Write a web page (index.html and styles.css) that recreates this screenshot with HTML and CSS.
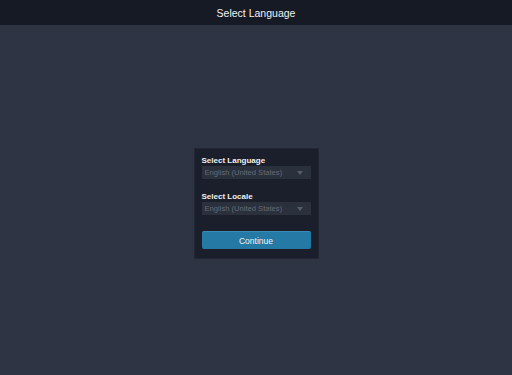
FILE: index.html
```html
<!DOCTYPE html>
<html lang="en">

<head>
    <meta charset="UTF-8">
    <link rel="stylesheet" href="styles.css">
</head>

<body>
    <header class="top-bar">Select Language</header>

    <main class="page">
        <div class="lang-panel">
            <label class="field-label">Select Language</label>
            <div class="select-box">
                <span>English (United States)</span>
                <span class="caret"></span>
            </div>

            <label class="field-label">Select Locale</label>
            <div class="select-box">
                <span>English (United States)</span>
                <span class="caret"></span>
            </div>

            <button class="continue-button">Continue</button>
        </div>
    </main>
</body>

</html>
```

FILE: styles.css
```css
html,
body {
    height: 100%;
}

body {
    margin: 0;
    font-family: "Liberation Sans", Arial, sans-serif;
    background-color: #2e3443;
    display: flex;
    flex-direction: column;
}

.top-bar {
    height: 25px;
    line-height: 26px;
    background-color: #161a25;
    color: #f2f2f2;
    text-align: center;
    font-size: 10.5px;
}

.page {
    flex: 1;
    display: flex;
    align-items: center;
    justify-content: center;
    padding-top: 7px;
}

.lang-panel {
    width: 109px;
    padding: 6px 7px 9px;
    background-color: #1a1f2b;
    border: 1px solid #222735;
    display: flex;
    flex-direction: column;
}

.field-label {
    color: #f0f0f0;
    font-size: 8px;
    font-weight: bold;
    height: 11px;
    line-height: 11px;
}

.select-box {
    height: 13px;
    background-color: #2b303d;
    color: #656a75;
    font-size: 7.6px;
    padding: 0 4px 0 3px;
    display: flex;
    align-items: center;
    justify-content: space-between;
    margin-bottom: 12px;
}

.caret {
    width: 0;
    height: 0;
    border-left: 3px solid transparent;
    border-right: 3px solid transparent;
    border-top: 4px solid #565b66;
    margin-right: 4px;
}

.continue-button {
    height: 18px;
    margin-top: 4px;
    background-color: #2479a5;
    border: none;
    border-top: 1px solid #3a8ab3;
    border-radius: 2px;
    color: #f4f4f4;
    font-family: inherit;
    font-size: 8.5px;
    padding: 0;
    cursor: pointer;
}
```
